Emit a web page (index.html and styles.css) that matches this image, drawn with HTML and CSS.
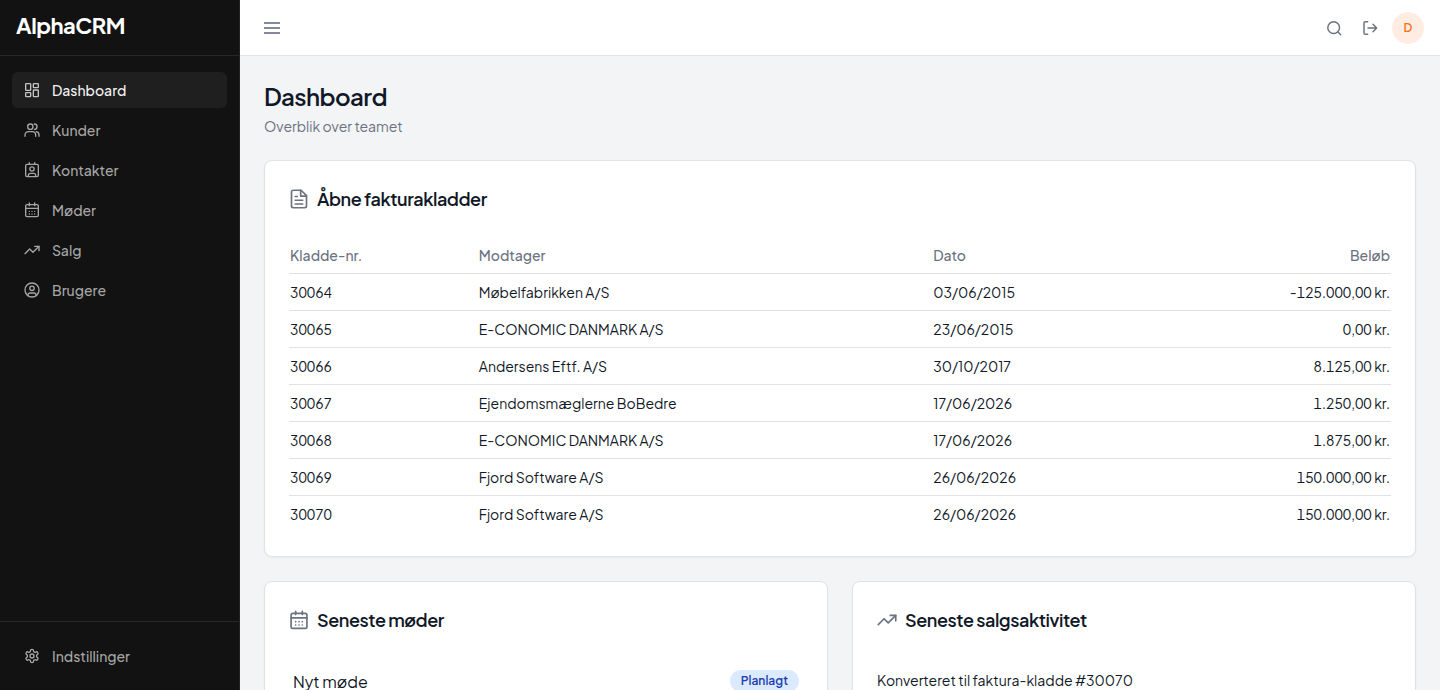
FILE: index.html
```html
<!DOCTYPE html>
<html lang="da">
<head>
    <meta charset="UTF-8">
    <meta name="viewport" content="width=device-width, initial-scale=1.0">
    <title>AlphaCRM</title>
    <link rel="stylesheet" href="styles.css">
</head>
<body>
    <svg class="sprite" aria-hidden="true">
        <symbol id="i-dashboard" viewBox="0 0 24 24">
            <rect x="2.5" y="2.5" width="7.5" height="10" rx="1"/>
            <rect x="14" y="2.5" width="7.5" height="6" rx="1"/>
            <rect x="14" y="12" width="7.5" height="10" rx="1"/>
            <rect x="2.5" y="16" width="7.5" height="6" rx="1"/>
        </symbol>
        <symbol id="i-users" viewBox="0 0 24 24">
            <circle cx="9.5" cy="7" r="4"/>
            <path d="M1.5 21.5v-2a5 5 0 0 1 5-5h6a5 5 0 0 1 5 5v2"/>
            <path d="M15.5 3a4 4 0 0 1 0 8"/>
            <path d="M18.5 14.5a5 5 0 0 1 4 5v2"/>
        </symbol>
        <symbol id="i-contact" viewBox="0 0 24 24">
            <rect x="2.5" y="3.5" width="19" height="18.5" rx="2"/>
            <path d="M8 1v2.5M16 1v2.5"/>
            <circle cx="12" cy="10.5" r="3.2"/>
            <path d="M6.5 21.5V20a3 3 0 0 1 3-3h5a3 3 0 0 1 3 3v1.5"/>
        </symbol>
        <symbol id="i-calendar" viewBox="0 0 24 24">
            <rect x="2.5" y="4" width="19" height="18" rx="2"/>
            <path d="M8 1.5v4M16 1.5v4M2.5 9.5h19"/>
            <path d="M8 14h.01M12 14h.01M16 14h.01M8 18h.01M12 18h.01M16 18h.01"/>
        </symbol>
        <symbol id="i-trend" viewBox="0 0 24 24">
            <path d="M1.5 17.5 8.5 10.5 13.5 15.5 22.5 6.5"/>
            <path d="M16 6.5h6.5V13"/>
        </symbol>
        <symbol id="i-user" viewBox="0 0 24 24">
            <circle cx="12" cy="12" r="10.5"/>
            <circle cx="12" cy="9.5" r="3.3"/>
            <path d="M6 20.5v-1a3 3 0 0 1 3-3h6a3 3 0 0 1 3 3v1"/>
        </symbol>
        <symbol id="i-settings" viewBox="0 0 24 24">
            <path d="M12.22 2h-.44a2 2 0 0 0-2 2v.18a2 2 0 0 1-1 1.73l-.43.25a2 2 0 0 1-2 0l-.15-.08a2 2 0 0 0-2.73.73l-.22.38a2 2 0 0 0 .73 2.73l.15.1a2 2 0 0 1 1 1.72v.51a2 2 0 0 1-1 1.74l-.15.09a2 2 0 0 0-.73 2.73l.22.38a2 2 0 0 0 2.73.73l.15-.08a2 2 0 0 1 2 0l.43.25a2 2 0 0 1 1 1.73V20a2 2 0 0 0 2 2h.44a2 2 0 0 0 2-2v-.18a2 2 0 0 1 1-1.73l.43-.25a2 2 0 0 1 2 0l.15.08a2 2 0 0 0 2.73-.73l.22-.39a2 2 0 0 0-.73-2.73l-.15-.08a2 2 0 0 1-1-1.74v-.5a2 2 0 0 1 1-1.74l.15-.09a2 2 0 0 0 .73-2.73l-.22-.38a2 2 0 0 0-2.73-.73l-.15.08a2 2 0 0 1-2 0l-.43-.25a2 2 0 0 1-1-1.73V4a2 2 0 0 0-2-2z"/>
            <circle cx="12" cy="12" r="3"/>
        </symbol>
        <symbol id="i-file" viewBox="0 0 24 24">
            <path d="M14.5 1.5H5a2 2 0 0 0-2 2v17a2 2 0 0 0 2 2h14a2 2 0 0 0 2-2V8z"/>
            <path d="M14 1.5v7h7M7.5 9H10M7.5 13.5h9M7.5 18h9"/>
        </symbol>
        <symbol id="i-search" viewBox="0 0 24 24">
            <circle cx="11.5" cy="11.5" r="8.8"/>
            <path d="m18 18 4 4"/>
        </symbol>
        <symbol id="i-logout" viewBox="0 0 24 24">
            <path d="M8.5 2.500H5a2 2 0 0 0-2 2v15a2 2 0 0 0 2 2h3.500"/>
            <path d="M9 12h13M16.500 6.500l5.500 5.500-5.500 5.500"/>
        </symbol>
    </svg>

    <div class="app">
        <aside class="sidebar">
            <div class="brand">AlphaCRM</div>
            <nav class="nav">
                <a class="nav-item active"><svg class="icon"><use href="#i-dashboard"/></svg><span>Dashboard</span></a>
                <a class="nav-item"><svg class="icon"><use href="#i-users"/></svg><span>Kunder</span></a>
                <a class="nav-item"><svg class="icon"><use href="#i-contact"/></svg><span>Kontakter</span></a>
                <a class="nav-item"><svg class="icon"><use href="#i-calendar"/></svg><span>Møder</span></a>
                <a class="nav-item"><svg class="icon"><use href="#i-trend"/></svg><span>Salg</span></a>
                <a class="nav-item"><svg class="icon"><use href="#i-user"/></svg><span>Brugere</span></a>
            </nav>
            <div class="sidebar-footer">
                <a class="nav-item"><svg class="icon"><use href="#i-settings"/></svg><span>Indstillinger</span></a>
            </div>
        </aside>

        <div class="main">
            <header class="topbar">
                <svg class="menu" viewBox="0 0 16 16"><path d="M0 3h16M0 8h16M0 13h16"/></svg>
                <div class="actions">
                    <svg class="icon"><use href="#i-search"/></svg>
                    <svg class="icon"><use href="#i-logout"/></svg>
                    <div class="avatar">D</div>
                </div>
            </header>

            <main class="content">
                <h1>Dashboard</h1>
                <p class="subtitle">Overblik over teamet</p>

                <section class="card invoices">
                    <h2><svg class="icon"><use href="#i-file"/></svg><span>Åbne fakturakladder</span></h2>
                    <table>
                        <thead>
                            <tr><th class="col-no">Kladde-nr.</th><th class="col-to">Modtager</th><th>Dato</th><th class="amount">Beløb</th></tr>
                        </thead>
                        <tbody>
                            <tr><td class="num">30064</td><td>Møbelfabrikken A/S</td><td>03/06/2015</td><td class="num amount">-125.000,00 kr.</td></tr>
                            <tr><td class="num">30065</td><td>E-CONOMIC DANMARK A/S</td><td>23/06/2015</td><td class="num amount">0,00 kr.</td></tr>
                            <tr><td class="num">30066</td><td>Andersens Eftf. A/S</td><td>30/10/2017</td><td class="num amount">8.125,00 kr.</td></tr>
                            <tr><td class="num">30067</td><td>Ejendomsmæglerne BoBedre</td><td>17/06/2026</td><td class="num amount">1.250,00 kr.</td></tr>
                            <tr><td class="num">30068</td><td>E-CONOMIC DANMARK A/S</td><td>17/06/2026</td><td class="num amount">1.875,00 kr.</td></tr>
                            <tr><td class="num">30069</td><td>Fjord Software A/S</td><td>26/06/2026</td><td class="num amount">150.000,00 kr.</td></tr>
                            <tr><td class="num">30070</td><td>Fjord Software A/S</td><td>26/06/2026</td><td class="num amount">150.000,00 kr.</td></tr>
                        </tbody>
                    </table>
                </section>

                <div class="columns">
                    <section class="card">
                        <h2><svg class="icon"><use href="#i-calendar"/></svg><span>Seneste møder</span></h2>
                        <div class="meeting">
                            <span class="meeting-name">Nyt møde</span>
                            <span class="badge">Planlagt</span>
                        </div>
                    </section>
                    <section class="card">
                        <h2><svg class="icon"><use href="#i-trend"/></svg><span>Seneste salgsaktivitet</span></h2>
                        <p class="activity">Konverteret til faktura-kladde #30070</p>
                    </section>
                </div>
            </main>
        </div>
    </div>
</body>
</html>
```
FILE: styles.css
```css
* {
    box-sizing: border-box;
}
body {
    margin: 0;
    font-family: "Plus Jakarta Sans", Inter, sans-serif;
    font-size: 14px;
    line-height: 20px;
    color: #111827;
    background-color: #f3f4f6;
    overflow: hidden;
}
.sprite {
    display: none;
}
.icon {
    width: 16px;
    height: 16px;
    flex-shrink: 0;
    fill: none;
    stroke: currentColor;
    stroke-width: 2;
    stroke-linecap: round;
    stroke-linejoin: round;
}
.app {
    display: flex;
    height: 100vh;
}

/* sidebar */
.sidebar {
    width: 240px;
    flex-shrink: 0;
    display: flex;
    flex-direction: column;
    background-color: #121212;
    border-right: 1px solid #222;
}
.brand {
    height: 56px;
    padding: 11px 16px 0;
    border-bottom: 1px solid #262626;
    color: #fff;
    font-size: 22px;
    font-weight: 700;
    line-height: 28px;
    letter-spacing: -0.5px;
}
.nav {
    flex: 1;
    display: flex;
    flex-direction: column;
    gap: 4px;
    padding: 16px 12px;
}
.nav-item {
    display: flex;
    align-items: center;
    gap: 12px;
    height: 36px;
    padding: 0 12px;
    border-radius: 6px;
    color: #a6a6a6;
    font-weight: 500;
}
.nav-item.active {
    background-color: #1f1f1f;
    color: #f2f2f2;
}
.nav-item.active .icon {
    color: #c4c4c4;
}
.sidebar-footer {
    height: 69px;
    padding: 16px 12px;
    border-top: 1px solid #262626;
}

/* top bar */
.main {
    flex: 1;
    min-width: 0;
}
.topbar {
    height: 56px;
    display: flex;
    align-items: center;
    justify-content: space-between;
    padding: 0 16px 0 24px;
    background-color: #fff;
    border-bottom: 1px solid #dfe2e7;
}
.menu {
    width: 16px;
    height: 16px;
    fill: none;
    stroke: #85879a;
    stroke-width: 1.9;
}
.actions {
    display: flex;
    align-items: center;
    gap: 20px;
    color: #6b7280;
}
.actions .icon {
    stroke-width: 2.2;
}
.avatar {
    width: 32px;
    height: 32px;
    margin-left: -6px;
    border-radius: 50%;
    background-color: #ffede3;
    color: #f97316;
    font-size: 12px;
    font-weight: 600;
    line-height: 32px;
    text-align: center;
}

/* page */
.content {
    height: calc(100vh - 56px);
    padding: 22px 24px 0;
    overflow: hidden;
}
h1 {
    margin: 0;
    font-size: 24px;
    font-weight: 600;
    line-height: 36px;
    letter-spacing: -0.6px;
}
.subtitle {
    margin: 2px 0 24px;
    color: #6b7280;
}
.card {
    padding: 24px;
    background-color: #fff;
    border: 1px solid #dfe2e7;
    border-radius: 8px;
    box-shadow: 0 1px 2px rgba(0, 0, 0, 0.05);
}
h2 {
    display: flex;
    align-items: center;
    gap: 8px;
    margin: 0;
    font-size: 18px;
    font-weight: 600;
    line-height: 28px;
    letter-spacing: -0.45px;
}
h2 .icon {
    width: 20px;
    height: 20px;
    color: #6b7280;
}
.invoices {
    height: 397px;
}
table {
    width: 100%;
    margin-top: 24px;
    table-layout: fixed;
    border-collapse: collapse;
}
th, td {
    height: 37px;
    padding: 1px 1px 0;
    text-align: left;
    border-bottom: 1px solid #dfe2e7;
}
th {
    height: 36px;
    color: #6b7280;
    font-weight: 500;
}
tbody tr:last-child td {
    border-bottom: none;
}
.col-no {
    width: 188.75px;
}
.col-to {
    width: 454.5px;
}
.num {
    font-variant-numeric: tabular-nums;
}
th.amount, td.amount {
    text-align: right;
}
.columns {
    display: grid;
    grid-template-columns: 1fr 1fr;
    gap: 24px;
    margin-top: 24px;
}
.columns .card {
    height: 300px;
}
.meeting {
    display: flex;
    justify-content: space-between;
    align-items: flex-start;
    padding: 36px 4px 0;
}
.meeting-name {
    font-size: 16px;
    line-height: 24px;
}
.badge {
    padding: 2px 11px;
    border-radius: 12px;
    background-color: #dbeafe;
    color: #1e40af;
    font-size: 12px;
    font-weight: 600;
    line-height: 18px;
}
.activity {
    margin: 36px 0 0;
}
```
